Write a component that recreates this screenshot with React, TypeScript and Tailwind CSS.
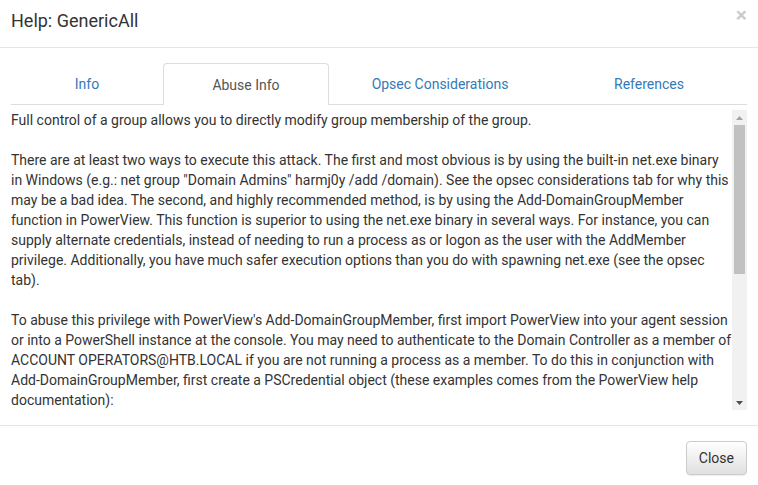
import React from "react";

const tabs = [
  { label: "Info", w: "w-[152px]" },
  { label: "Abuse Info", w: "w-[166px]", active: true },
  { label: "Opsec Considerations", w: "w-[222px]" },
  { label: "References", w: "w-[196px]" },
];

const paragraphs: string[][] = [
  ["Full control of a group allows you to directly modify group membership of the group."],
  [
    "There are at least two ways to execute this attack. The first and most obvious is by using the built-in net.exe binary",
    'in Windows (e.g.: net group "Domain Admins" harmj0y /add /domain). See the opsec considerations tab for why this',
    "may be a bad idea. The second, and highly recommended method, is by using the Add-DomainGroupMember",
    "function in PowerView. This function is superior to using the net.exe binary in several ways. For instance, you can",
    "supply alternate credentials, instead of needing to run a process as or logon as the user with the AddMember",
    "privilege. Additionally, you have much safer execution options than you do with spawning net.exe (see the opsec",
    "tab).",
  ],
  [
    "To abuse this privilege with PowerView's Add-DomainGroupMember, first import PowerView into your agent session",
    "or into a PowerShell instance at the console. You may need to authenticate to the Domain Controller as a member of",
    "ACCOUNT OPERATORS@HTB.LOCAL if you are not running a process as a member. To do this in conjunction with",
    "Add-DomainGroupMember, first create a PSCredential object (these examples comes from the PowerView help",
    "documentation):",
  ],
];

function Scrollbar() {
  return (
    <div className="flex w-[15px] shrink-0 flex-col bg-[#f1f1f1]">
      <div className="flex h-[15px] items-center justify-center">
        <svg width="7" height="4" viewBox="0 0 7 4">
          <path d="M0 4 L3.5 0 L7 4 Z" fill="#a3a3a3" />
        </svg>
      </div>
      <div className="flex-1 px-[2px]">
        <div className="h-[149px] bg-[#c1c1c1]" />
      </div>
      <div className="flex h-[15px] items-center justify-center">
        <svg width="7" height="4" viewBox="0 0 7 4">
          <path d="M0 0 L7 0 L3.5 4 Z" fill="#505050" />
        </svg>
      </div>
    </div>
  );
}

export default function App() {
  return (
    <div className="w-[758px] h-[485px] overflow-hidden bg-white text-[#333] font-['Roboto',sans-serif]">
      {/* header */}
      <div className="relative h-[48px] border-b border-[#e5e5e5] px-[11px] pt-[8px]">
        <h4 className="text-[18px] leading-[25px] font-normal">Help: GenericAll</h4>
        <button className="absolute right-[11px] top-[5px] text-[21px] font-bold leading-none text-black opacity-20">
          ×
        </button>
      </div>

      {/* body */}
      <div className="px-[11px] pt-[15px] pb-[15px]">
        <ul className="flex text-[14px] leading-[20px]">
          {tabs.map((t) =>
            t.active ? (
              <li
                key={t.label}
                className={`${t.w} h-[42px] flex items-center justify-center rounded-t-[4px] border border-b-0 border-[#ddd] bg-white text-[#555]`}
              >
                {t.label}
              </li>
            ) : (
              <li
                key={t.label}
                className={`${t.w} h-[42px] flex items-center justify-center border-b border-[#ddd] text-[#337ab7]`}
              >
                {t.label}
              </li>
            )
          )}
        </ul>
        <div className="mt-[5px] flex h-[300px]">
          <div className="flex-1 overflow-hidden text-[14px] leading-[20px]">
            {paragraphs.map((p, i) => (
              <p key={i} className="mb-[20px] whitespace-nowrap">
                {p.map((line, j) => (
                  <span key={j} className="block">
                    {line}
                  </span>
                ))}
              </p>
            ))}
          </div>
          <Scrollbar />
        </div>
      </div>

      {/* footer */}
      <div className="flex justify-end border-t border-[#e5e5e5] px-[11px] pt-[15px]">
        <button className="h-[34px] rounded-[4px] border border-[#ccc] bg-gradient-to-b from-white to-[#e0e0e0] px-[12px] text-[14px] leading-[20px] text-[#333] shadow-[inset_0_1px_0_rgba(255,255,255,0.15),0_1px_1px_rgba(0,0,0,0.075)]">
          Close
        </button>
      </div>
    </div>
  );
}
